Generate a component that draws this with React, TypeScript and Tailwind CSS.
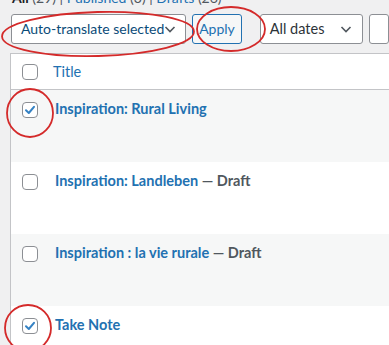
import React from 'react'

const Checkbox = ({ checked }: { checked?: boolean }) => (
  <span className="w-[16px] h-[16px] shrink-0 rounded-[4px] border border-[#8c8f94] bg-white flex items-center justify-center">
    {checked && (
      <svg width="14" height="14" viewBox="0 0 14 14">
        <path d="M3 7.3 L5.8 10 L11 3.8" fill="none" stroke="#3582c4" strokeWidth="2" strokeLinecap="round" strokeLinejoin="round" />
      </svg>
    )}
  </span>
)

const Chevron = () => (
  <svg width="12" height="12" viewBox="0 0 12 12">
    <path d="M1.5 4 L6 8.5 L10.5 4" fill="none" stroke="#50575e" strokeWidth="1.6" />
  </svg>
)

const rows = [
  { title: 'Inspiration: Rural Living', checked: true, draft: false },
  { title: 'Inspiration: Landleben', checked: false, draft: true },
  { title: 'Inspiration : la vie rurale', checked: false, draft: true },
  { title: 'Take Note', checked: true, draft: false },
]

export default function App() {
  return (
    <div className="relative w-[389px] h-[345px] overflow-hidden bg-[#f0f0f1] font-['Lato',sans-serif] text-[14.5px] text-[#2c3338]">
      {/* status filter links, cut off at the top */}
      <div className="-mt-[12px] pl-[12px] text-[14px] leading-[20px] whitespace-nowrap text-[#50575e]">
        <span className="font-bold text-[#1d2327]">All</span> (29) |{' '}
        <span className="text-[#2271b1]">Published</span> (3) |{' '}
        <span className="text-[#2271b1]">Drafts</span> (26)
      </div>

      {/* bulk actions */}
      <div className="mt-[6px] flex items-center pl-[11px] h-[30px]">
        <div className="w-[181px] h-[30px] rounded-[3px] border border-[#8c8f94] bg-white flex items-center justify-between pl-[9px] pr-[9px] pb-[1px] text-[14px] text-[#0a4b78]">
          <span className="whitespace-nowrap">Auto-translate selected</span>
          <Chevron />
        </div>
        <div className="ml-[6px] w-[54px] h-[30px] rounded-[3px] border border-[#2271b1] bg-[#f6f7f7] flex items-center justify-center pb-[2px] text-[#2271b1] text-[14px]">
          Apply
        </div>
        <div className="ml-[18px] w-[111px] h-[30px] rounded-[3px] border border-[#8c8f94] bg-white flex items-center justify-between pl-[9px] pr-[10px] pb-[1px]">
          <span className="whitespace-nowrap">All dates</span>
          <Chevron />
        </div>
        <div className="ml-[6px] w-[20px] h-[30px] rounded-[3px] border border-[#8c8f94] bg-white shrink-0" />
      </div>

      {/* posts table */}
      <div className="mt-[9px] ml-[10px] border-l border-t border-[#c3c4c7] bg-white">
        <div className="h-[36px] flex items-center border-b border-[#c3c4c7] pl-[11px]">
          <Checkbox />
          <span className="ml-[15px] text-[#2271b1]">Title</span>
        </div>
        {rows.map((r, i) => (
          <div key={r.title} className={`h-[72px] flex items-start pl-[11px] pt-[12px] ${i % 2 === 0 ? 'bg-[#f6f7f7]' : 'bg-white'}`}>
            <Checkbox checked={r.checked} />
            <div className="ml-[17px] -mt-[3px] leading-[20px] font-bold whitespace-nowrap">
              <span className="text-[#2271b1]">{r.title}</span>
              {r.draft && <span className="text-[#50575e]"> — Draft</span>}
            </div>
          </div>
        ))}
      </div>

      {/* red annotation marks */}
      <svg className="absolute inset-0 pointer-events-none" width="389" height="345" viewBox="0 0 389 345">
        <g fill="none" stroke="#d42a2a" strokeWidth="1.8">
          <ellipse cx="98" cy="34" rx="96" ry="22" transform="rotate(-1.5 98 34)" />
          <ellipse cx="231" cy="29" rx="34" ry="22" />
          <ellipse cx="30" cy="113" rx="23" ry="24" />
          <ellipse cx="28" cy="328" rx="23" ry="23" />
        </g>
      </svg>
    </div>
  )
}
